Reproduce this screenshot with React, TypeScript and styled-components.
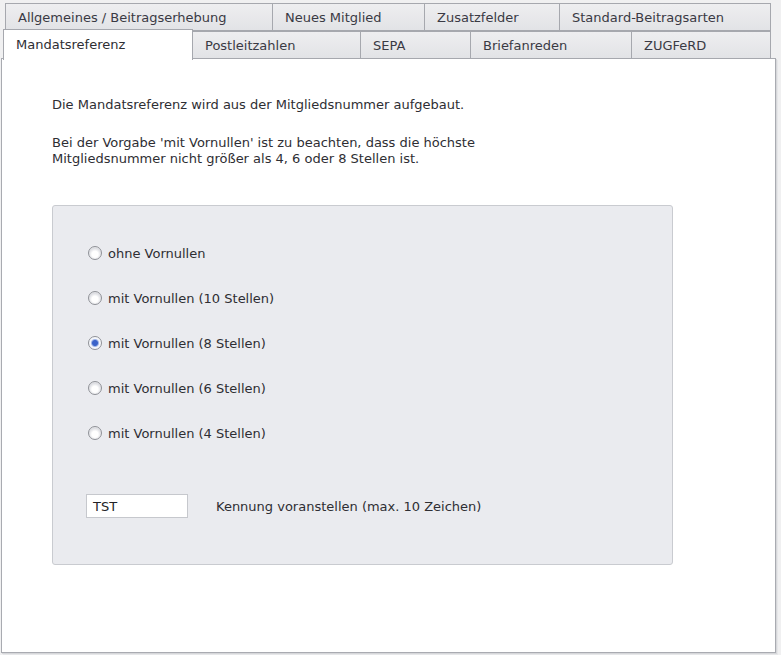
import styled, { createGlobalStyle } from 'styled-components';

type TabDef = { label: string; width: number };

const topRow: TabDef[] = [
  { label: 'Allgemeines / Beitragserhebung', width: 268 },
  { label: 'Neues Mitglied', width: 152 },
  { label: 'Zusatzfelder', width: 135 },
  { label: 'Standard-Beitragsarten', width: 211 },
];

const bottomRow: TabDef[] = [
  { label: 'Postleitzahlen', width: 168 },
  { label: 'SEPA', width: 110 },
  { label: 'Briefanreden', width: 161 },
  { label: 'ZUGFeRD', width: 139 },
];

const options = [
  'ohne Vornullen',
  'mit Vornullen (10 Stellen)',
  'mit Vornullen (8 Stellen)',
  'mit Vornullen (6 Stellen)',
  'mit Vornullen (4 Stellen)',
];

const App = () => {
  const selected = 2;

  return (
    <>
      <GlobalStyle />
      <Window>
        <TabRow $indent={5}>
          {topRow.map((t) => (
            <Tab key={t.label} $width={t.width}>
              {t.label}
            </Tab>
          ))}
        </TabRow>
        <TabRow $indent={3}>
          <ActiveTab $width={190}>Mandatsreferenz</ActiveTab>
          {bottomRow.map((t) => (
            <Tab key={t.label} $width={t.width}>
              {t.label}
            </Tab>
          ))}
        </TabRow>
        <Panel>
          <Intro>Die Mandatsreferenz wird aus der Mitgliedsnummer aufgebaut.</Intro>
          <Intro>
            Bei der Vorgabe 'mit Vornullen' ist zu beachten, dass die höchste
            <br />
            Mitgliedsnummer nicht größer als 4, 6 oder 8 Stellen ist.
          </Intro>
          <GroupBox>
            <OptionList>
              {options.map((o, i) => (
                <Option key={o}>
                  <Radio $checked={i === selected} />
                  {o}
                </Option>
              ))}
            </OptionList>
            <PrefixRow>
              <TextBox>TST</TextBox>
              <span>Kennung voranstellen (max. 10 Zeichen)</span>
            </PrefixRow>
          </GroupBox>
        </Panel>
      </Window>
    </>
  );
};

const GlobalStyle = createGlobalStyle`
  body {
    margin: 0;
    background: #f0f0f1;
    font-family: "DejaVu Sans", Verdana, sans-serif;
    font-size: 13px;
    color: #2e2e33;
  }
`;

const Window = styled.div`
  width: 781px;
  height: 655px;
  padding-top: 3px;
  box-sizing: border-box;
  display: flex;
  flex-direction: column;
`;

const TabRow = styled.div<{ $indent: number }>`
  display: flex;
  margin-left: ${({ $indent }) => $indent}px;
  position: relative;
`;

const Tab = styled.div<{ $width: number }>`
  width: ${({ $width }) => $width}px;
  height: 28px;
  box-sizing: border-box;
  padding: 0 0 0 12px;
  display: flex;
  align-items: center;
  border: 1px solid #a6a8ae;
  border-left-width: 0;
  background: linear-gradient(#eeeef0, #e2e3e6);
  color: #3a3a44;
  white-space: nowrap;
  &:first-child {
    border-left-width: 1px;
  }
`;

const ActiveTab = styled(Tab)`
  height: 31px;
  margin-top: -2px;
  margin-bottom: -1px;
  border-left-width: 1px;
  border-bottom: none;
  background: #ffffff;
  z-index: 1;
  padding-bottom: 2px;
  color: #2e2e33;
`;

const Panel = styled.div`
  margin: -1px 0 0 1px;
  width: 775px;
  height: 595px;
  box-sizing: border-box;
  border: 1px solid #a9abb1;
  background: #ffffff;
  box-shadow: 1px 1px 0 #d6d7da, 2px 2px 0 #e6e7e9;
  padding: 38px 0 0 50px;
`;

const Intro = styled.p`
  margin: 0 0 22px;
  line-height: 16px;
`;

const GroupBox = styled.div`
  margin-top: 38px;
  width: 621px;
  height: 360px;
  box-sizing: border-box;
  background: #eaebef;
  border: 1px solid #c9cbd0;
  border-radius: 3px;
  padding: 39px 0 0 35px;
`;

const OptionList = styled.div`
  display: flex;
  flex-direction: column;
  gap: 29px;
`;

const Option = styled.label`
  display: flex;
  align-items: center;
  gap: 6px;
  height: 16px;
`;

const Radio = styled.span<{ $checked: boolean }>`
  width: 14px;
  height: 14px;
  box-sizing: border-box;
  border-radius: 50%;
  border: 1px solid #8f9197;
  background: ${({ $checked }) =>
    $checked
      ? 'radial-gradient(circle, #3b63c9 0 2.5px, #9fb4e6 3.5px, #f4f6fb 4.5px)'
      : 'radial-gradient(circle at 50% 60%, #ffffff 0 3px, #dcdde2 6px)'};
  box-shadow: inset 0 0 1px #ffffff;
`;

const PrefixRow = styled.div`
  display: flex;
  align-items: center;
  gap: 28px;
  margin: 53px 0 0 -2px;
`;

const TextBox = styled.div`
  width: 102px;
  height: 24px;
  box-sizing: border-box;
  border: 1px solid #c6c8cd;
  background: #ffffff;
  padding-left: 6px;
  display: flex;
  align-items: center;
  color: #222226;
`;

export default App;
